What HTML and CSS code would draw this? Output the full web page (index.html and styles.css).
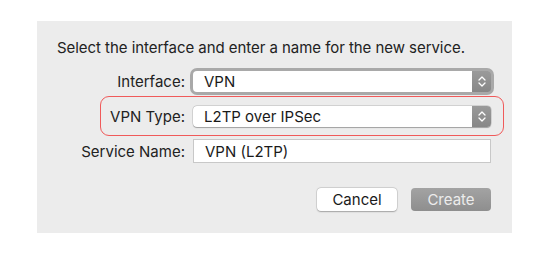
FILE: index.html
```html
<!DOCTYPE html>
<html>
<head>
<meta charset="utf-8">
<link rel="stylesheet" href="styles.css">
</head>
<body>
<div class="panel">
  <p class="heading">Select the interface and enter a name for the new service.</p>
  <div class="form">
    <label class="label">Interface:</label>
    <div class="popup focused">
      <span class="value">VPN</span>
      <span class="stepper"><svg width="8" height="13" viewBox="0 0 8 13"><path d="M1 5 L4 2 L7 5 M1 8 L4 11 L7 8" fill="none" stroke="#fff" stroke-width="1.3" stroke-linecap="round" stroke-linejoin="round"/></svg></span>
    </div>
    <label class="label">VPN Type:</label>
    <div class="popup">
      <span class="value">L2TP over IPSec</span>
      <span class="stepper"><svg width="8" height="13" viewBox="0 0 8 13"><path d="M1 5 L4 2 L7 5 M1 8 L4 11 L7 8" fill="none" stroke="#fff" stroke-width="1.3" stroke-linecap="round" stroke-linejoin="round"/></svg></span>
    </div>
    <label class="label">Service Name:</label>
    <div class="textfield">VPN (L2TP)</div>
  </div>
  <div class="buttons">
    <button class="btn cancel">Cancel</button>
    <button class="btn create">Create</button>
  </div>
  <div class="highlight"></div>
</div>
</body>
</html>
```

FILE: styles.css
```css
html, body {
  margin: 0;
  padding: 0;
  background: #ffffff;
}
body {
  font-family: Inter, "Liberation Sans", Arial, sans-serif;
  color: #222222;
}
.panel {
  position: relative;
  margin: 21px 0 0 37px;
  width: 475px;
  height: 212px;
  box-sizing: border-box;
  padding: 18px 21px 0 20px;
  background: #ececec;
}
.heading {
  margin: 0;
  font-size: 15px;
  line-height: 17px;
  letter-spacing: -0.05px;
  color: #222;
}
.form {
  display: grid;
  grid-template-columns: 128px 298px;
  grid-auto-rows: 24px;
  column-gap: 8px;
  row-gap: 11px;
  margin-top: 13px;
}
.label {
  display: flex;
  align-items: center;
  justify-content: flex-end;
  font-size: 15px;
  color: #222;
}
.popup {
  align-self: center;
  height: 21px;
  display: flex;
  align-items: stretch;
  background: #ffffff;
  border-radius: 4px;
  box-shadow: 0 0 0 0.5px rgba(0,0,0,0.18), 0 0.5px 1px rgba(0,0,0,0.25);
  overflow: hidden;
}
.popup.focused {
  box-shadow: 0 0 0 3px #a9a9a9;
  overflow: visible;
}
.popup.focused .stepper {
  border-radius: 0 3px 3px 0;
}
.value {
  flex: 1;
  display: flex;
  align-items: center;
  padding-left: 11px;
  font-size: 15px;
  color: #1a1a1a;
}
.stepper {
  width: 19px;
  display: flex;
  align-items: center;
  justify-content: center;
  background: linear-gradient(#9a9a9a, #878787);
}
.textfield {
  box-sizing: border-box;
  height: 24px;
  display: flex;
  align-items: center;
  padding-left: 11px;
  background: #fff;
  border: 1px solid #c8c8c8;
  font-size: 15px;
  color: #1a1a1a;
}
.buttons {
  display: flex;
  justify-content: flex-end;
  gap: 14px;
  margin-top: 25px;
}
.btn {
  width: 80px;
  height: 23px;
  border: none;
  border-radius: 4px;
  font-family: Inter, "Liberation Sans", Arial, sans-serif;
  font-size: 15px;
  padding: 0;
}
.cancel {
  background: #ffffff;
  color: #1a1a1a;
  box-shadow: 0 0 0 0.5px rgba(0,0,0,0.15), 0 0.5px 1.5px rgba(0,0,0,0.25);
}
.create {
  background: linear-gradient(#a3a3a3, #8e8e8e);
  color: #ececec;
}
.highlight {
  position: absolute;
  left: 63px;
  top: 75px;
  width: 404px;
  height: 40px;
  box-sizing: border-box;
  border: 1.5px solid #f05a5a;
  border-radius: 9px;
  pointer-events: none;
}
```
